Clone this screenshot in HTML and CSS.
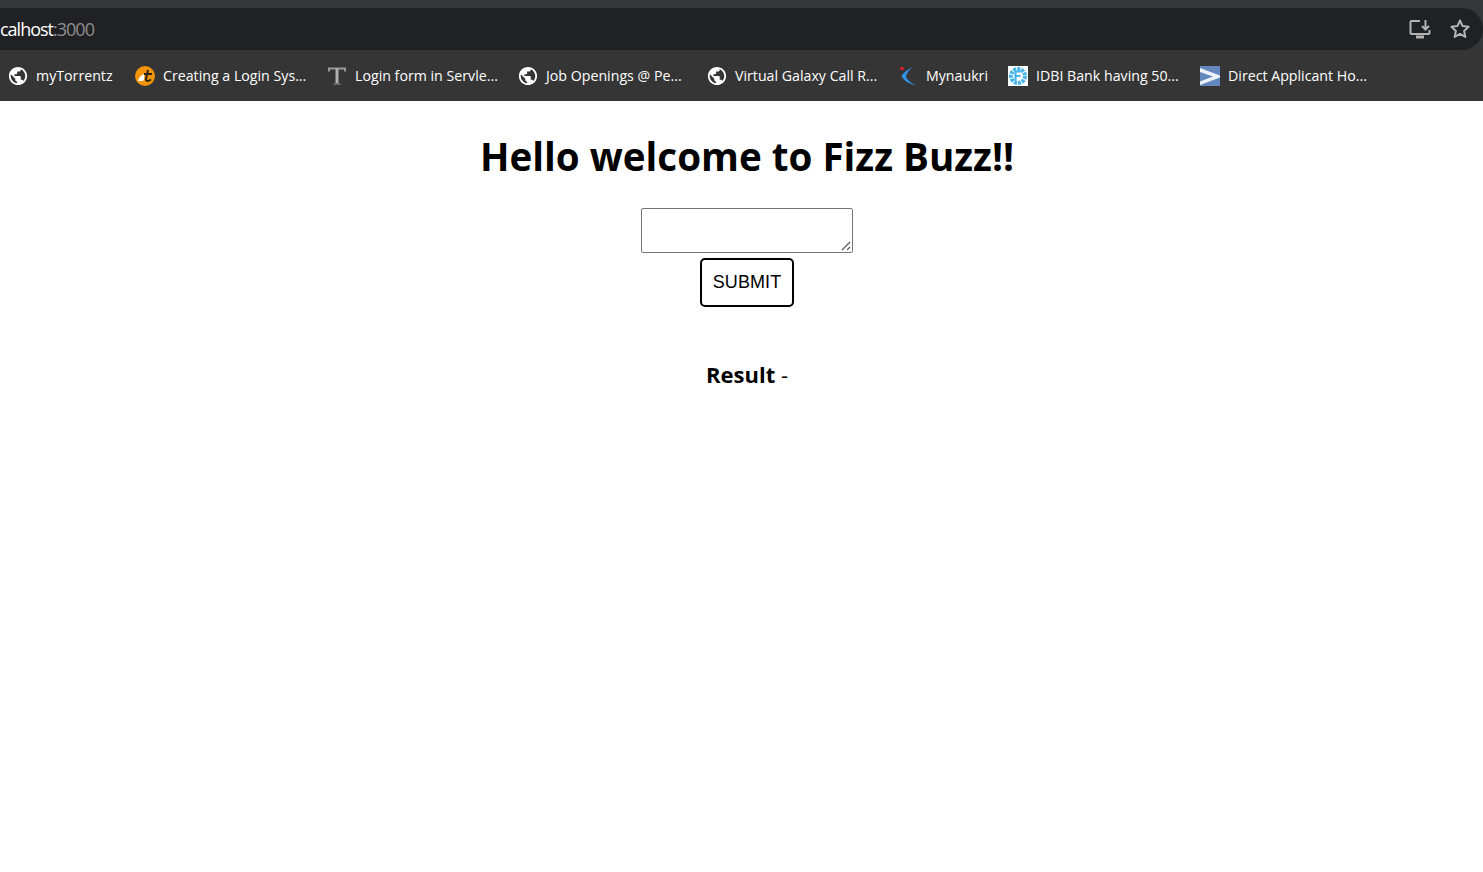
FILE: index.html
```html
<!DOCTYPE html>
<html lang="en">
<head>
    <meta charset="UTF-8">
    <title>Fizz Buzz</title>
    <link rel="stylesheet" href="styles.css">
</head>
<body>
    <header class="browser">
        <div class="addressbar">
            <div class="url">calhost<span class="port">:3000</span></div>
            <div class="addr-icons">
                <svg width="24" height="22" viewBox="0 0 24 22" fill="none" stroke="#b4b4b4" stroke-width="2">
                    <path d="M12 3H3.500a1 1 0 0 0-1 1v11a1 1 0 0 0 1 1h17a1 1 0 0 0 1-1v-3"/>
                    <path d="M8 19h8" stroke-width="3"/>
                    <path d="M17.500 2v9M14 8l3.500 3.500L21 8"/>
                </svg>
                <svg width="22" height="22" viewBox="0 0 22 22" fill="none" stroke="#b4b4b4" stroke-width="2" stroke-linejoin="round">
                    <path d="M11 2.500l2.600 5.600 6 .7-4.500 4.100 1.200 6L11 15.900l-5.300 3 1.200-6-4.500-4.100 6-.7z"/>
                </svg>
            </div>
        </div>
        <div class="bookmarks">
            <div class="bookmark">
                <svg class="icon" viewBox="1 1 22 22"><path fill="#fff" fill-rule="evenodd" d="M12 2C6.480 2 2 6.480 2 12s4.480 10 10 10 10-4.480 10-10S17.520 2 12 2zm-1 17.930c-3.950-.490-7-3.850-7-7.930 0-.620.080-1.210.210-1.790L9 15v1c0 1.100.900 2 2 2v1.930zm6.900-2.540c-.260-.810-1-1.390-1.900-1.390h-1v-3c0-.550-.450-1-1-1H8v-2h2c.550 0 1-.450 1-1V7h2c1.100 0 2-.900 2-2v-.410c2.930 1.190 5 4.060 5 7.410 0 2.080-.800 3.970-2.100 5.390z"/></svg>
                <span>myTorrentz</span>
            </div>
            <div class="bookmark">
                <svg class="icon" viewBox="0 0 20 20"><circle cx="10" cy="10" r="10" fill="#f29407"/><path d="M3 15c1-4 3-6 6-7 0 3 1 5-1 7z" fill="#fff"/><path d="M13 4l-2 9c0 2.500 2 2.500 5 .5M9 8h8" fill="none" stroke="#2a2015" stroke-width="2"/></svg>
                <span>Creating a Login Sys...</span>
            </div>
            <div class="bookmark">
                <svg class="icon" viewBox="0 0 20 20"><path d="M2 5.500V2.500h16v3" fill="none" stroke="#9a9a9a" stroke-width="2"/><path d="M10 2.500v15" stroke="#b0b0b0" stroke-width="3"/><path d="M6.500 18h7" stroke="#6a6a6a" stroke-width="2"/></svg>
                <span>Login form in Servle...</span>
            </div>
            <div class="bookmark">
                <svg class="icon" viewBox="1 1 22 22"><path fill="#fff" fill-rule="evenodd" d="M12 2C6.480 2 2 6.480 2 12s4.480 10 10 10 10-4.480 10-10S17.520 2 12 2zm-1 17.930c-3.950-.490-7-3.850-7-7.930 0-.620.080-1.210.210-1.790L9 15v1c0 1.100.900 2 2 2v1.930zm6.900-2.540c-.260-.810-1-1.390-1.900-1.390h-1v-3c0-.550-.450-1-1-1H8v-2h2c.550 0 1-.450 1-1V7h2c1.100 0 2-.900 2-2v-.410c2.930 1.190 5 4.060 5 7.410 0 2.080-.800 3.970-2.100 5.390z"/></svg>
                <span>Job Openings @ Pe...</span>
            </div>
            <div class="bookmark">
                <svg class="icon" viewBox="1 1 22 22"><path fill="#fff" fill-rule="evenodd" d="M12 2C6.480 2 2 6.480 2 12s4.480 10 10 10 10-4.480 10-10S17.520 2 12 2zm-1 17.930c-3.950-.490-7-3.850-7-7.930 0-.620.080-1.210.210-1.790L9 15v1c0 1.100.900 2 2 2v1.930zm6.900-2.540c-.260-.810-1-1.390-1.900-1.390h-1v-3c0-.550-.450-1-1-1H8v-2h2c.550 0 1-.450 1-1V7h2c1.100 0 2-.900 2-2v-.410c2.930 1.190 5 4.060 5 7.410 0 2.080-.800 3.970-2.100 5.390z"/></svg>
                <span>Virtual Galaxy Call R...</span>
            </div>
            <div class="bookmark">
                <svg class="icon" viewBox="0 0 20 20">
                    <defs><linearGradient id="swoosh" x1="0" y1="0" x2="1" y2="1"><stop offset="0.6" stop-color="#2f8fe0"/><stop offset="1" stop-color="#4a5560"/></linearGradient></defs>
                    <path d="M14 1C10 3.500 5 7 3.500 10c2 4.500 8 8.500 15.500 10-5.500-3-10-6-11-9.500C8.500 8 11 4 14 1z" fill="url(#swoosh)"/>
                    <circle cx="4" cy="2.500" r="1.800" fill="#e0202a"/>
                </svg>
                <span>Mynaukri</span>
            </div>
            <div class="bookmark">
                <svg class="icon" viewBox="0 0 20 20"><rect width="20" height="20" fill="#fff"/><circle cx="10" cy="10" r="7" fill="#fff" stroke="#45b5ea" stroke-width="4" stroke-dasharray="3 1"/><path d="M7.500 15V5.500h6M7.500 10h5" fill="none" stroke="#45b5ea" stroke-width="2.200"/></svg>
                <span>IDBI Bank having 50...</span>
            </div>
            <div class="bookmark">
                <svg class="icon" viewBox="0 0 20 20"><rect width="20" height="20" fill="#6488bd"/><path d="M0 2l20 7.500v2L0 19v-3.500L13 10.500 0 6z" fill="#eef2f8"/></svg>
                <span>Direct Applicant Ho...</span>
            </div>
        </div>
    </header>

    <main class="page">
        <h1>Hello welcome to Fizz Buzz!!</h1>
        <div class="input-wrap">
            <textarea class="number-input"></textarea>
            <svg class="grip" width="10" height="10" viewBox="0 0 10 10" stroke="#5a5a5a" stroke-width="1.200"><path d="M1 9l8-8M6 9l3-3"/></svg>
        </div>
        <button class="submit-btn">SUBMIT</button>
        <h3 class="result">Result <span class="dash">-</span></h3>
    </main>
</body>
</html>
```

FILE: styles.css
```css
body {
    margin: 0;
    background-color: #fff;
    font-family: "Open Sans", "Noto Sans", sans-serif;
    overflow: hidden;
}

.browser {
    background-color: #353639;
    padding-top: 8px;
}

.addressbar {
    height: 42px;
    background-color: #202124;
    border-radius: 0 21px 21px 0;
    display: flex;
    align-items: center;
    justify-content: space-between;
    padding-right: 12px;
}

.url {
    color: #fff;
    font-size: 18px;
    letter-spacing: -1px;
}

.port {
    color: #8e8e8e;
}

.addr-icons {
    display: flex;
    align-items: center;
    gap: 17px;
}

.bookmarks {
    height: 51px;
    background-color: #353535;
    display: grid;
    grid-template-columns: 127px 192px 191px 189px 191px 110px 192px auto;
    align-items: center;
    padding-left: 8px;
    color: #fff;
    font-size: 14.2px;
}

.bookmark {
    display: flex;
    align-items: center;
    gap: 8px;
    white-space: nowrap;
}

.icon {
    width: 20px;
    height: 20px;
    flex: none;
}

.page {
    display: flex;
    flex-direction: column;
    align-items: center;
    padding-left: 11px;
}

h1 {
    font-size: 38.6px;
    font-weight: 700;
    margin: 26px 0 23px;
    line-height: 58px;
    color: #000;
}

.input-wrap {
    position: relative;
}

.number-input {
    width: 206px;
    height: 39px;
    padding: 2px;
    border: 1px solid #767676;
    border-radius: 2px;
    margin: 0;
    display: block;
    resize: none;
}

.grip {
    position: absolute;
    right: 2px;
    bottom: 2px;
}

.submit-btn {
    margin-top: 5px;
    width: 94px;
    height: 49px;
    background-color: #fff;
    border: 2px solid #000;
    border-radius: 5px;
    font-family: "Liberation Sans", sans-serif;
    font-size: 18px;
    letter-spacing: 0.1px;
    color: #000;
    padding: 0;
}

.result {
    margin: 49px 0 0;
    font-size: 22px;
    font-weight: 700;
    line-height: 36px;
}

.dash {
    font-weight: 400;
}
```
